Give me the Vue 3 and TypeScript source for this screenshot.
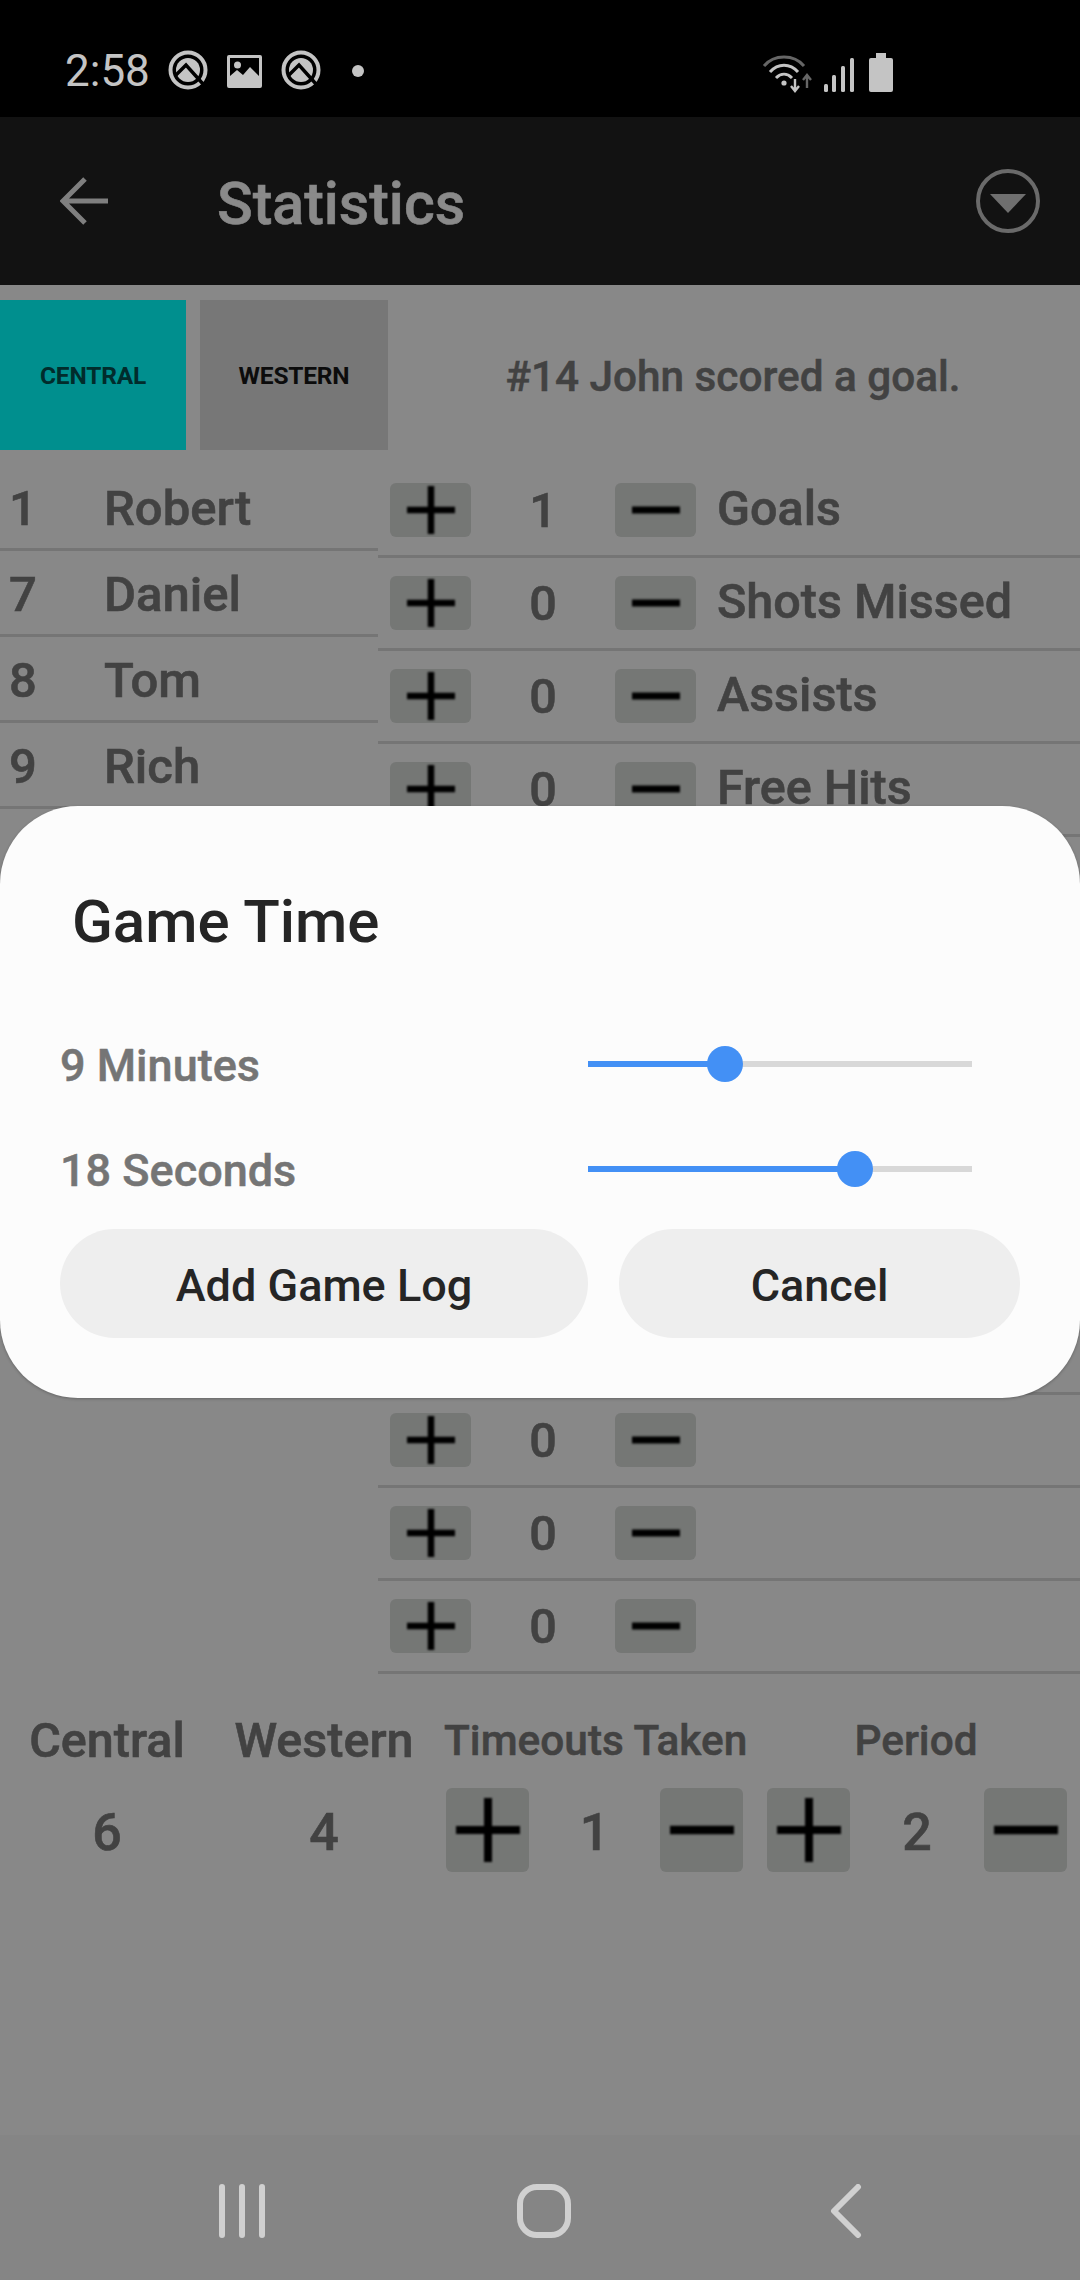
<template>
  <div class="screen">
    <div class="status-bar">
      <span class="clock">2:58</span>
      <svg class="q-icon" viewBox="0 0 48 48">
        <circle cx="24" cy="23" r="17.5" fill="none" stroke="#c4c4c4" stroke-width="4" />
        <circle cx="24" cy="23" r="12" fill="#c4c4c4" />
        <path d="M12 28 22 18 39 37" fill="none" stroke="#000" stroke-width="3.4" />
      </svg>
      <svg class="photo-icon" viewBox="0 0 35 33">
        <path fill="#c4c4c4" fill-rule="evenodd" d="M2 0h31a2 2 0 0 1 2 2v29a2 2 0 0 1-2 2H2a2 2 0 0 1-2-2V2a2 2 0 0 1 2-2zM3 3v18l7-6 6 5 7-8 9 9V3z" />
        <circle cx="10.500" cy="10" r="3.500" fill="#c4c4c4" />
      </svg>
      <svg class="q-icon" viewBox="0 0 48 48">
        <circle cx="24" cy="23" r="17.5" fill="none" stroke="#c4c4c4" stroke-width="4" />
        <circle cx="24" cy="23" r="12" fill="#c4c4c4" />
        <path d="M12 28 22 18 39 37" fill="none" stroke="#000" stroke-width="3.4" />
      </svg>
      <span class="dot"></span>
      <svg class="net-icon" viewBox="0 0 132 44">
        <!-- wifi -->
        <path d="M3 17C13 5 33 5 43 17" fill="none" stroke="#666" stroke-width="3" />
        <path d="M9 23C17 14 29 14 37 23" fill="none" stroke="#c4c4c4" stroke-width="3" />
        <path d="M15 29C20 24 26 24 31 29" fill="none" stroke="#c4c4c4" stroke-width="3" />
        <circle cx="23" cy="34" r="2.600" fill="#c4c4c4" />
        <path d="M34 30v12M30 37l4 5 4-5" fill="none" stroke="#c4c4c4" stroke-width="2.400" />
        <path d="M46 39V27M42 31l4-5 4 5" fill="none" stroke="#666" stroke-width="2.400" />
        <!-- signal -->
        <rect x="63" y="35" width="4" height="8" rx="1.500" fill="#c4c4c4" />
        <rect x="71" y="26" width="4" height="17" rx="1.500" fill="#c4c4c4" />
        <rect x="80" y="17" width="4" height="26" rx="1.500" fill="#c4c4c4" />
        <rect x="89" y="9" width="4" height="34" rx="1.500" fill="#c4c4c4" />
        <!-- battery -->
        <path fill="#c4c4c4" d="M115 4h10v5h5a2 2 0 0 1 2 2v30a2 2 0 0 1-2 2h-20a2 2 0 0 1-2-2V11a2 2 0 0 1 2-2h5z" />
      </svg>
    </div>

    <header class="app-bar">
      <svg class="back-arrow" viewBox="0 0 48 48">
        <path d="M48 24H4M25 2 3 24l22 22" fill="none" stroke="#7f7f7f" stroke-width="5" />
      </svg>
      <h1 class="title">Statistics</h1>
      <svg class="menu-icon" viewBox="0 0 64 64">
        <circle cx="32" cy="32" r="30" fill="none" stroke="#6a6a6a" stroke-width="4" />
        <path d="M14 25h36L32 44z" fill="#6f6f6f" />
      </svg>
    </header>

    <main class="content">
      <div class="top-row">
        <button class="team central">CENTRAL</button>
        <button class="team western">WESTERN</button>
        <p class="message">#14 John scored a goal.</p>
      </div>

      <div class="lists">
        <ul class="players">
          <li v-for="p in players" :key="p.num" class="player">
            <span class="num">{{ p.num }}</span>
            <span>{{ p.name }}</span>
          </li>
        </ul>
        <ul class="stats">
          <li v-for="(s, i) in stats" :key="i" class="stat">
            <button class="step">
              <svg class="sign" viewBox="0 0 48 48"><path d="M0 24h48M24 0v48" stroke="#000" stroke-width="6.500" /></svg>
            </button>
            <span class="count">{{ s.count }}</span>
            <button class="step">
              <svg class="sign" viewBox="0 0 48 48"><path d="M0 24h48" stroke="#000" stroke-width="7" /></svg>
            </button>
            <span class="stat-label">{{ s.label }}</span>
          </li>
        </ul>
      </div>

      <div class="summary">
        <div class="score">
          <div class="sum-label">Central</div>
          <div class="sum-value">6</div>
        </div>
        <div class="score second">
          <div class="sum-label">Western</div>
          <div class="sum-value">4</div>
        </div>
        <div v-for="c in counters" :key="c.label" class="counter" :class="c.cls">
          <div class="sum-label small">{{ c.label }}</div>
          <div class="sum-value spread">
            <button class="big-step">
              <svg class="big-sign" viewBox="0 0 64 64"><path d="M0 32h64M32 0v64" stroke="#000" stroke-width="8" /></svg>
            </button>
            <span>{{ c.value }}</span>
            <button class="big-step">
              <svg class="big-sign" viewBox="0 0 64 64"><path d="M0 32h64" stroke="#000" stroke-width="8.500" /></svg>
            </button>
          </div>
        </div>
      </div>
    </main>

    <nav class="nav-bar">
      <div class="nav-cell">
        <svg class="nav-icon" viewBox="0 0 60 54">
          <path d="M10 3v48M30 3v48M50 3v48" stroke="#d0d0d0" stroke-width="6" stroke-linecap="round" fill="none" />
        </svg>
      </div>
      <div class="nav-cell">
        <svg class="nav-icon" viewBox="0 0 60 54">
          <rect x="6" y="3" width="48" height="48" rx="17" fill="none" stroke="#d0d0d0" stroke-width="6" />
        </svg>
      </div>
      <div class="nav-cell">
        <svg class="nav-icon" viewBox="0 0 60 54">
          <path d="M42 3 18 27l24 24" fill="none" stroke="#d0d0d0" stroke-width="6" stroke-linecap="round" stroke-linejoin="round" />
        </svg>
      </div>
    </nav>

    <section class="dialog">
      <h2 class="dialog-title">Game Time</h2>
      <div v-for="row in sliders" :key="row.label" class="slider-row">
        <span class="slider-label">{{ row.label }}</span>
        <div class="track">
          <div class="fill" :style="{ width: row.pct + '%' }"></div>
          <div class="thumb" :style="{ left: row.pct + '%' }"></div>
        </div>
      </div>
      <div class="actions">
        <button class="action add">Add Game Log</button>
        <button class="action cancel">Cancel</button>
      </div>
    </section>
  </div>
</template>

<script setup lang="ts">
interface Stat {
  label: string;
  count: number;
}

const players = [
  { num: 1, name: "Robert" },
  { num: 7, name: "Daniel" },
  { num: 8, name: "Tom" },
  { num: 9, name: "Rich" },
];

const labels = ["Goals", "Shots Missed", "Assists", "Free Hits"];

// 13 rows, only the first four labels show above the dialog
const stats: Stat[] = Array.from({ length: 13 }, (_, i) => ({
  label: labels[i] ?? "",
  count: i === 0 ? 1 : 0,
}));

const counters = [
  { label: "Timeouts Taken", value: 1, cls: "timeouts" },
  { label: "Period", value: 2, cls: "period" },
];

const sliders = [
  { label: "9 Minutes", pct: 35.7 },
  { label: "18 Seconds", pct: 69.6 },
];
</script>

<style>
html,
body {
  margin: 0;
  background: #888888;
}
</style>

<style scoped>
* {
  box-sizing: border-box;
}

.screen {
  position: relative;
  display: flex;
  flex-direction: column;
  width: 1080px;
  height: 2280px;
  overflow: hidden;
  background: #888888;
  font-family: Roboto, "Liberation Sans", sans-serif;
  color: #424242;
}

button {
  display: block;
  padding: 0;
  border: none;
  font-family: inherit;
  color: inherit;
}

ul {
  margin: 0;
  padding: 0;
  list-style: none;
}

/* status bar */
.status-bar {
  display: flex;
  align-items: center;
  height: 117px;
  padding: 25px 0 0 65px;
  background: #000000;
}

.clock {
  width: 84px;
  font-size: 44px;
  line-height: 44px;
  color: #c4c4c4;
}

.q-icon {
  width: 48px;
  height: 48px;
  margin-left: 15px;
}

.photo-icon {
  width: 35px;
  height: 33px;
  margin-left: 15px;
}

.dot {
  width: 12px;
  height: 12px;
  margin-left: 27px;
  border-radius: 50%;
  background: #c4c4c4;
}

.net-icon {
  width: 132px;
  height: 44px;
  margin-left: 397px;
  margin-top: -1px;
}

/* app bar */
.app-bar {
  display: flex;
  align-items: center;
  height: 168px;
  padding: 0 40px 0 60px;
  background: #121212;
}

.back-arrow {
  width: 48px;
  height: 48px;
}

.title {
  flex: 1;
  margin: 4px 0 0 109px;
  font-size: 59px;
  font-weight: 500;
  color: #8a8a8a;
  -webkit-text-stroke: 0.6px #8a8a8a;
}

.menu-icon {
  width: 64px;
  height: 64px;
}

/* stats background */
.content {
  flex: 1;
  padding-top: 15px;
}

.top-row {
  display: flex;
  height: 150px;
}

.team {
  width: 188px;
  height: 150px;
  padding-top: 1px;
  font-size: 24.5px;
  font-weight: 700;
  letter-spacing: -0.2px;
  color: #0c0c0c;
}

.central {
  width: 186px;
  margin-right: 14px;
  background: #008f8e;
  color: #012c2c;
}

.western {
  background: #777777;
}

.message {
  flex: 1;
  margin: 0;
  padding: 2px 2px 0 0;
  font-size: 42.3px;
  font-weight: 500;
  line-height: 150px;
  text-align: center;
  -webkit-text-stroke: 0.5px #424242;
}

.lists {
  display: flex;
  margin-top: 15px;
}

.players {
  width: 378px;
}

.player {
  display: flex;
  align-items: center;
  height: 86px;
  padding: 4px 0 0 9px;
  border-bottom: 3px solid #757575;
  font-size: 49px;
  font-weight: 500;
  line-height: 50px;
  -webkit-text-stroke: 0.6px #424242;
}

.num {
  width: 95px;
}

.stats {
  flex: 1;
}

.stat {
  display: flex;
  align-items: center;
  height: 93px;
  padding-left: 12px;
  border-bottom: 3px solid #757575;
}

.step {
  display: flex;
  align-items: center;
  justify-content: center;
  width: 81px;
  height: 54px;
  border-radius: 6px;
  background: #757775;
}

.sign {
  width: 48px;
  height: 48px;
  filter: blur(1.3px);
}

.count {
  width: 144px;
  padding-top: 2px;
  font-size: 48.5px;
  font-weight: 500;
  line-height: 54px;
  text-align: center;
  -webkit-text-stroke: 0.6px #424242;
}

.stat-label {
  margin: -2px 0 0 21px;
  font-size: 48.5px;
  font-weight: 500;
  line-height: 54px;
  -webkit-text-stroke: 0.6px #424242;
}

.summary {
  display: flex;
  padding-top: 42px;
}

.score {
  width: 214px;
  text-align: center;
}

.score.second {
  width: 220px;
}

.counter {
  text-align: center;
}

.timeouts {
  width: 297px;
  margin-left: 12px;
}

.period {
  width: 300px;
  margin-left: 24px;
}

.sum-label {
  height: 54px;
  font-size: 48.5px;
  font-weight: 500;
  line-height: 50px;
  white-space: nowrap;
  -webkit-text-stroke: 0.6px #424242;
}

.sum-label.small {
  margin-left: -2px;
  font-size: 42.4px;
  -webkit-text-stroke: 0.5px #424242;
}

.sum-value {
  display: flex;
  align-items: center;
  justify-content: center;
  height: 84px;
  margin-top: 18px;
  padding-top: 4px;
  font-size: 52px;
  font-weight: 500;
  -webkit-text-stroke: 0.6px #424242;
}

.sum-value.spread {
  justify-content: space-between;
  padding-top: 0;
}

.sum-value.spread span {
  padding-top: 4px;
}

.big-step {
  display: flex;
  align-items: center;
  justify-content: center;
  width: 83px;
  height: 84px;
  border-radius: 6px;
  background: #757775;
}

.big-sign {
  width: 64px;
  height: 64px;
  filter: blur(1.3px);
}

/* navigation bar */
.nav-bar {
  display: flex;
  height: 145px;
  padding: 7px 83px 0 91px;
  background: #858585;
}

.nav-cell {
  display: flex;
  flex: 1;
  align-items: center;
  justify-content: center;
}

.nav-icon {
  width: 60px;
  height: 54px;
}

/* dialog */
.dialog {
  position: absolute;
  top: 806px;
  left: 0;
  right: 0;
  height: 592px;
  padding: 0 60px;
  border-radius: 78px;
  background: #fcfcfc;
  box-shadow: 0 1px 3px rgba(0, 0, 0, 0.25);
}

.dialog-title {
  margin: 0 0 0 12px;
  padding-top: 81px;
  font-size: 60px;
  font-weight: 500;
  line-height: 70px;
  color: #252525;
}

.slider-row {
  display: flex;
  align-items: center;
  justify-content: space-between;
  height: 105px;
  padding-right: 48px;
}

.dialog-title + .slider-row {
  margin-top: 54px;
}

.slider-label {
  margin-top: 4px;
  font-size: 45px;
  font-weight: 500;
  color: #757575;
  -webkit-text-stroke: 0.5px #757575;
}

.track {
  position: relative;
  width: 384px;
  height: 6px;
  background: #d8d8d8;
}

.fill {
  height: 100%;
  background: #4390f5;
}

.thumb {
  position: absolute;
  top: -15px;
  width: 36px;
  height: 36px;
  margin-left: -18px;
  border-radius: 50%;
  background: #4390f5;
}

.actions {
  display: flex;
  gap: 31px;
  margin-top: 8px;
}

.action {
  height: 109px;
  padding-top: 3px;
  border-radius: 55px;
  background: #eeeeee;
  font-size: 45px;
  font-weight: 500;
  color: #252525;
}

.add {
  width: 528px;
}

.cancel {
  width: 401px;
}
</style>
